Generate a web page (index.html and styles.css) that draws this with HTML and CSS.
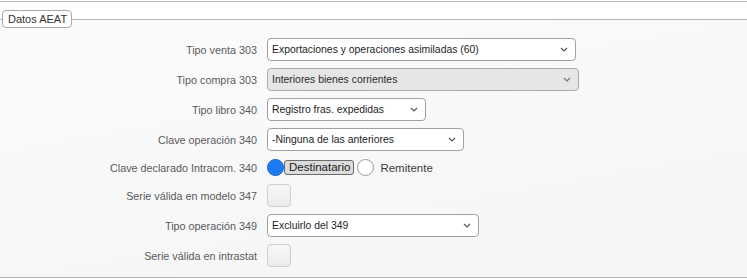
FILE: index.html
```html
<!DOCTYPE html>
<html lang="es">
<head>
<meta charset="utf-8">
<title>Datos AEAT</title>
<link rel="stylesheet" href="styles.css">
</head>
<body>
<div class="topbar"></div>
<fieldset class="group">
  <legend class="group-title">Datos AEAT</legend>
  <div class="form">
    <label class="lbl">Tipo venta 303</label>
    <div class="ctl"><div class="sel w1"><span class="sel-text">Exportaciones y operaciones asimiladas (60)</span><svg class="chev" width="8" height="5" viewBox="0 0 8 5"><path d="M1 1l3 3 3-3" fill="none" stroke="#555" stroke-width="1.2"/></svg></div></div>

    <label class="lbl">Tipo compra 303</label>
    <div class="ctl"><div class="sel w2 disabled"><span class="sel-text">Interiores bienes corrientes</span><svg class="chev" width="8" height="5" viewBox="0 0 8 5"><path d="M1 1l3 3 3-3" fill="none" stroke="#777" stroke-width="1.2"/></svg></div></div>

    <label class="lbl">Tipo libro 340</label>
    <div class="ctl"><div class="sel w3"><span class="sel-text">Registro fras. expedidas</span><svg class="chev" width="8" height="5" viewBox="0 0 8 5"><path d="M1 1l3 3 3-3" fill="none" stroke="#555" stroke-width="1.2"/></svg></div></div>

    <label class="lbl">Clave operación 340</label>
    <div class="ctl"><div class="sel w4"><span class="sel-text">-Ninguna de las anteriores</span><svg class="chev" width="8" height="5" viewBox="0 0 8 5"><path d="M1 1l3 3 3-3" fill="none" stroke="#555" stroke-width="1.2"/></svg></div></div>

    <label class="lbl radio-lbl">Clave declarado Intracom. 340</label>
    <div class="ctl radio-row">
      <span class="radio checked"></span><span class="radio-text focused">Destinatario</span>
      <span class="radio second"></span><span class="radio-text plain">Remitente</span>
    </div>

    <label class="lbl">Serie válida en modelo 347</label>
    <div class="ctl"><span class="check"></span></div>

    <label class="lbl">Tipo operación 349</label>
    <div class="ctl"><div class="sel w7"><span class="sel-text">Excluirlo del 349</span><svg class="chev" width="8" height="5" viewBox="0 0 8 5"><path d="M1 1l3 3 3-3" fill="none" stroke="#555" stroke-width="1.2"/></svg></div></div>

    <label class="lbl">Serie válida en intrastat</label>
    <div class="ctl"><span class="check"></span></div>
  </div>
</fieldset>
</body>
</html>
```

FILE: styles.css
```css
html, body {
  margin: 0;
  padding: 0;
  background: #ffffff;
  font-family: "Liberation Sans", Arial, sans-serif;
}

.topbar {
  height: 1px;
  margin-top: 1px;
  background: #bdbdbd;
}

.group {
  margin: 8px 0 0 0;
  padding: 0 0 10px 0;
  border: none;
  border-top: 1px solid #b5b5b5;
  border-bottom: 1px solid #b5b5b5;
  background: linear-gradient(170deg, #fbfbfb 0%, #f5f5f5 100%);
  min-width: 0;
}

.group-title {
  margin-left: 2px;
  padding: 0 4px 0 5px;
  height: 16px;
  line-height: 16px;
  border: 1px solid #a9a9a9;
  border-radius: 4px;
  background: #ffffff;
  font-size: 11px;
  color: #333;
}

.form {
  display: grid;
  grid-template-columns: 257px auto;
  column-gap: 10px;
  row-gap: 7px;
  padding-top: 10px;
  align-items: center;
}

.lbl {
  text-align: right;
  font-size: 10.8px;
  color: #5a5a5a;
  white-space: nowrap;
}

.ctl {
  display: flex;
  align-items: center;
}

.sel {
  box-sizing: border-box;
  height: 23px;
  display: flex;
  align-items: center;
  justify-content: space-between;
  padding: 0 7px 0 4px;
  border: 1px solid #a0a0a0;
  border-radius: 4px;
  background: #ffffff;
  font-size: 10.4px;
  color: #1e1e1e;
}

.sel.disabled {
  background: #e6e6e6;
  border-color: #ababab;
  color: #2a2a2a;
}

.w1 { width: 309px; }
.w2 { width: 312px; }
.w3 { width: 159px; }
.w4 { width: 197px; }
.w7 { width: 212px; }

.chev { flex: none; }

.radio-row {
  height: 19px;
}

.radio {
  box-sizing: border-box;
  width: 17px;
  height: 17px;
  border-radius: 50%;
  border: 1px solid #9a9a9a;
  background: #ffffff;
  flex: none;
}

.radio.checked {
  background: #1b7af2;
  border-color: #0f5ccc;
  box-shadow: inset 0 0 0 1px #2f86f5;
}

.radio.second {
  margin-left: 3px;
}

.radio-text {
  font-size: 11.5px;
  color: #1a1a1a;
}

.radio-text.focused {
  box-sizing: border-box;
  height: 15px;
  line-height: 13px;
  padding: 0 3px 0 4px;
  border: 1px solid #6a6a6a;
  border-radius: 3px;
  background: #dcdcdc;
  margin-left: 0;
}

.radio-text.plain {
  margin-left: 6px;
  color: #3c3c3c;
}

.check {
  box-sizing: border-box;
  width: 24px;
  height: 23px;
  border: 1px solid #cfcfcf;
  border-radius: 4px;
  background: linear-gradient(#f7f7f7, #ececec);
}
```
